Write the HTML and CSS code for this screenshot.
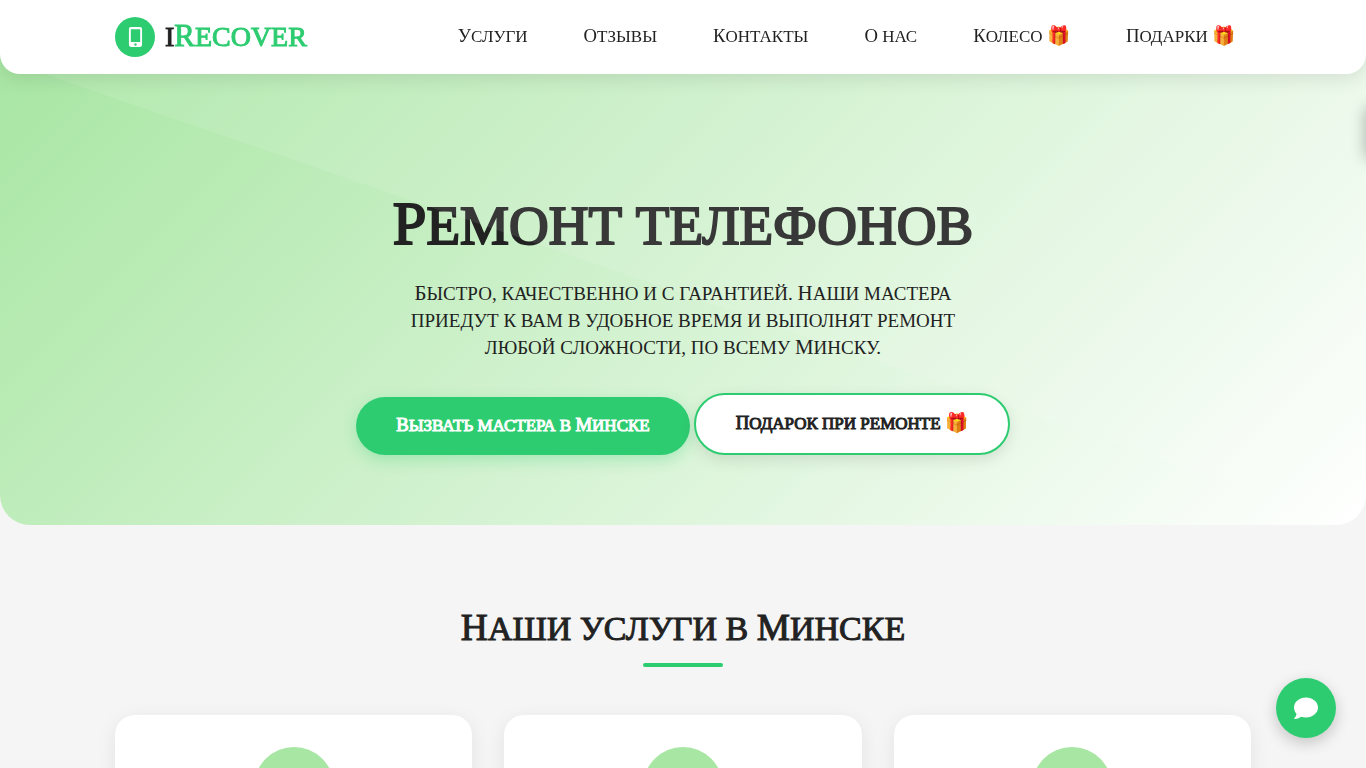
FILE: index.html
```html
<!DOCTYPE html>
<html lang="ru">
<head>
<meta charset="utf-8">
<meta name="viewport" content="width=device-width, initial-scale=1">
<title>iRecover — Ремонт телефонов</title>
<link rel="stylesheet" href="styles.css">
</head>
<body>
<header class="header">
  <div class="container header-row">
    <a class="logo" href="#">
      <span class="logo-icon">
        <svg viewBox="0 0 384 512" width="15" height="20" aria-hidden="true"><path fill="#fff" fill-rule="evenodd" d="M80 0h224c35 0 56 21 56 56v400c0 35-21 56-56 56H80c-35 0-56-21-56-56V56C24 21 45 0 80 0zm-8 56v328h240V56zm120 360a32 32 0 1 0 0 64 32 32 0 0 0 0-64z"/></svg>
      </span>
      <span class="logo-text sc">i<span class="logo-accent"><span class="cap">R</span>ecover</span></span>
    </a>
    <nav class="nav sc">
      <a href="#services"><span class="cap">У</span>слуги</a>
      <a href="#reviews"><span class="cap">О</span>тзывы</a>
      <a href="#contacts"><span class="cap">К</span>онтакты</a>
      <a href="#about"><span class="cap">О</span> нас</a>
      <a href="#wheel"><span class="cap">К</span>олесо <span class="cap">🎁</span></a>
      <a href="#gifts"><span class="cap">П</span>одарки <span class="cap">🎁</span></a>
    </nav>
  </div>
</header>
<main>
  <section class="hero">
    <div class="container">
      <h1 class="sc"><span class="cap">Р</span>емонт телефонов</h1>
      <p class="lead sc"><span class="cap">Б</span>ыстро, качественно и с гарантией. <span class="cap">Н</span>аши мастера приедут к вам в удобное время и выполнят ремонт любой сложности, по всему <span class="cap">М</span>инску.</p>
      <div class="actions sc">
        <a class="btn btn-primary" href="#call"><span><span class="cap">В</span>ызвать мастера в <span class="cap">М</span>инске</span></a>
        <a class="btn btn-outline" href="#gift"><span><span class="cap">П</span>одарок при ремонте <span class="cap">🎁</span></span></a>
      </div>
    </div>
  </section>
  <section class="services" id="services">
    <div class="container">
      <h2 class="sc"><span class="cap">Н</span>аши услуги в <span class="cap">М</span>инске</h2>
      <div class="cards">
        <article class="card"><div class="card-icon"></div></article>
        <article class="card"><div class="card-icon"></div></article>
        <article class="card"><div class="card-icon"></div></article>
      </div>
    </div>
  </section>
</main>
<aside class="drawer" aria-hidden="true"></aside>
<button class="chat" type="button" aria-label="Чат">
  <svg viewBox="0 0 24 24" width="24" height="24" aria-hidden="true"><path fill="#fff" d="M12 1.500C5.400 1.500 0 5.900 0 11.500c0 2.500 1 4.700 2.500 6.200C2.300 19.500 1.500 21 .3 22.300c-.4.400-.2.800.3.800 3 0 5.200-1.200 6.600-2.300 1.500.5 3.100.7 4.800.7 6.600 0 12-4.400 12-10s-5.400-10-12-10z"/></svg>
</button>
</body>
</html>
```
FILE: styles.css
```css
* {
  box-sizing: border-box;
  margin: 0;
  padding: 0;
}

html {
  overflow-x: hidden;
  scrollbar-width: none;
}

body {
  font-family: "Liberation Serif", "Times New Roman", serif;
  color: #222;
  background: #f5f5f5;
  overflow-x: hidden;
}

a {
  color: inherit;
  text-decoration: none;
}

/* Small capitals with full-size initials */
.sc {
  text-transform: uppercase;
}

.cap {
  font-size: 1.1em;
  line-height: 1;
}

.container {
  max-width: 1200px;
  margin: 0 auto;
  padding: 0 32px;
}

.header {
  position: sticky;
  top: 0;
  z-index: 10;
  background: #fff;
  border-radius: 0 0 20px 20px;
  box-shadow: 0 4px 20px rgba(0, 0, 0, 0.1);
}

.header-row {
  display: flex;
  align-items: center;
  justify-content: space-between;
  height: 74px;
}

.logo {
  display: flex;
  align-items: center;
  gap: 10px;
}

.logo-icon {
  display: flex;
  align-items: center;
  justify-content: center;
  width: 40px;
  height: 40px;
  border-radius: 50%;
  background: #2ecc71;
}

.logo-text {
  font-size: 28px;
  -webkit-text-stroke: 1px currentColor;
}

.logo-accent {
  color: #2ecc71;
}

.nav {
  display: flex;
  gap: 56px;
  padding-right: 16px;
  font-size: 17px;
  white-space: nowrap;
}

.hero {
  position: relative;
  margin-top: -20px;
  padding: 136px 0 70px;
  text-align: center;
  background: linear-gradient(135deg, #a8e6a3 0%, #fff 100%);
  border-radius: 0 0 30px 30px;
}

.hero::before {
  content: "";
  position: absolute;
  inset: 0;
  background: rgba(255, 255, 255, 0.1);
  border-radius: 0 0 30px 30px;
  clip-path: polygon(0 1%, 0 0, 100% 0, 100% 100%, 99% 100%);
}

h1 {
  margin-bottom: 18px;
  font-size: 55px;
  font-weight: 400;
  line-height: 72px;
  -webkit-text-stroke: 2px currentColor;
}

.lead {
  position: relative;
  max-width: 600px;
  margin: 0 auto 32px;
  font-size: 19px;
  line-height: 27px;
}

.actions {
  position: relative;
  display: flex;
  justify-content: center;
  align-items: flex-end;
  gap: 4px;
}

.btn {
  display: flex;
  align-items: center;
  justify-content: center;
  height: 58px;
  padding: 0 40px;
  border-radius: 50px;
  font-size: 17px;
  -webkit-text-stroke: 1px currentColor;
  white-space: nowrap;
}

.btn-primary {
  color: #fff;
  background: #2ecc71;
  box-shadow: 0 5px 15px rgba(46, 204, 113, 0.3);
}

.btn-outline {
  height: 62px;
  border: 2px solid #2ecc71;
  background: #fff;
  box-shadow: 0 5px 15px rgba(0, 0, 0, 0.1);
}

.services {
  padding: 80px 0;
}

h2 {
  margin-bottom: 48px;
  font-size: 34px;
  font-weight: 400;
  line-height: 48px;
  text-align: center;
  -webkit-text-stroke: 1px currentColor;
}

h2::after {
  content: "";
  display: block;
  width: 80px;
  height: 4px;
  margin: 10px auto 0;
  border-radius: 2px;
  background: #2ecc71;
}

.cards {
  display: grid;
  grid-template-columns: repeat(3, 1fr);
  gap: 32px;
}

.card {
  padding: 32px;
  min-height: 320px;
  background: #fff;
  border-radius: 20px;
  box-shadow: 0 5px 20px rgba(0, 0, 0, 0.08);
}

.card-icon {
  width: 80px;
  height: 80px;
  margin: 0 auto;
  border-radius: 50%;
  background: #a8e6a3;
}

.drawer {
  position: fixed;
  top: 104px;
  left: 100%;
  width: 60px;
  height: 50px;
  background: #fff;
  box-shadow: 0 4px 16px rgba(0, 0, 0, 0.3);
}

.chat {
  position: fixed;
  right: 30px;
  bottom: 30px;
  display: flex;
  align-items: center;
  justify-content: center;
  width: 60px;
  height: 60px;
  border: 0;
  border-radius: 50%;
  background: #2ecc71;
  box-shadow: 0 5px 15px rgba(0, 0, 0, 0.2);
}
```
